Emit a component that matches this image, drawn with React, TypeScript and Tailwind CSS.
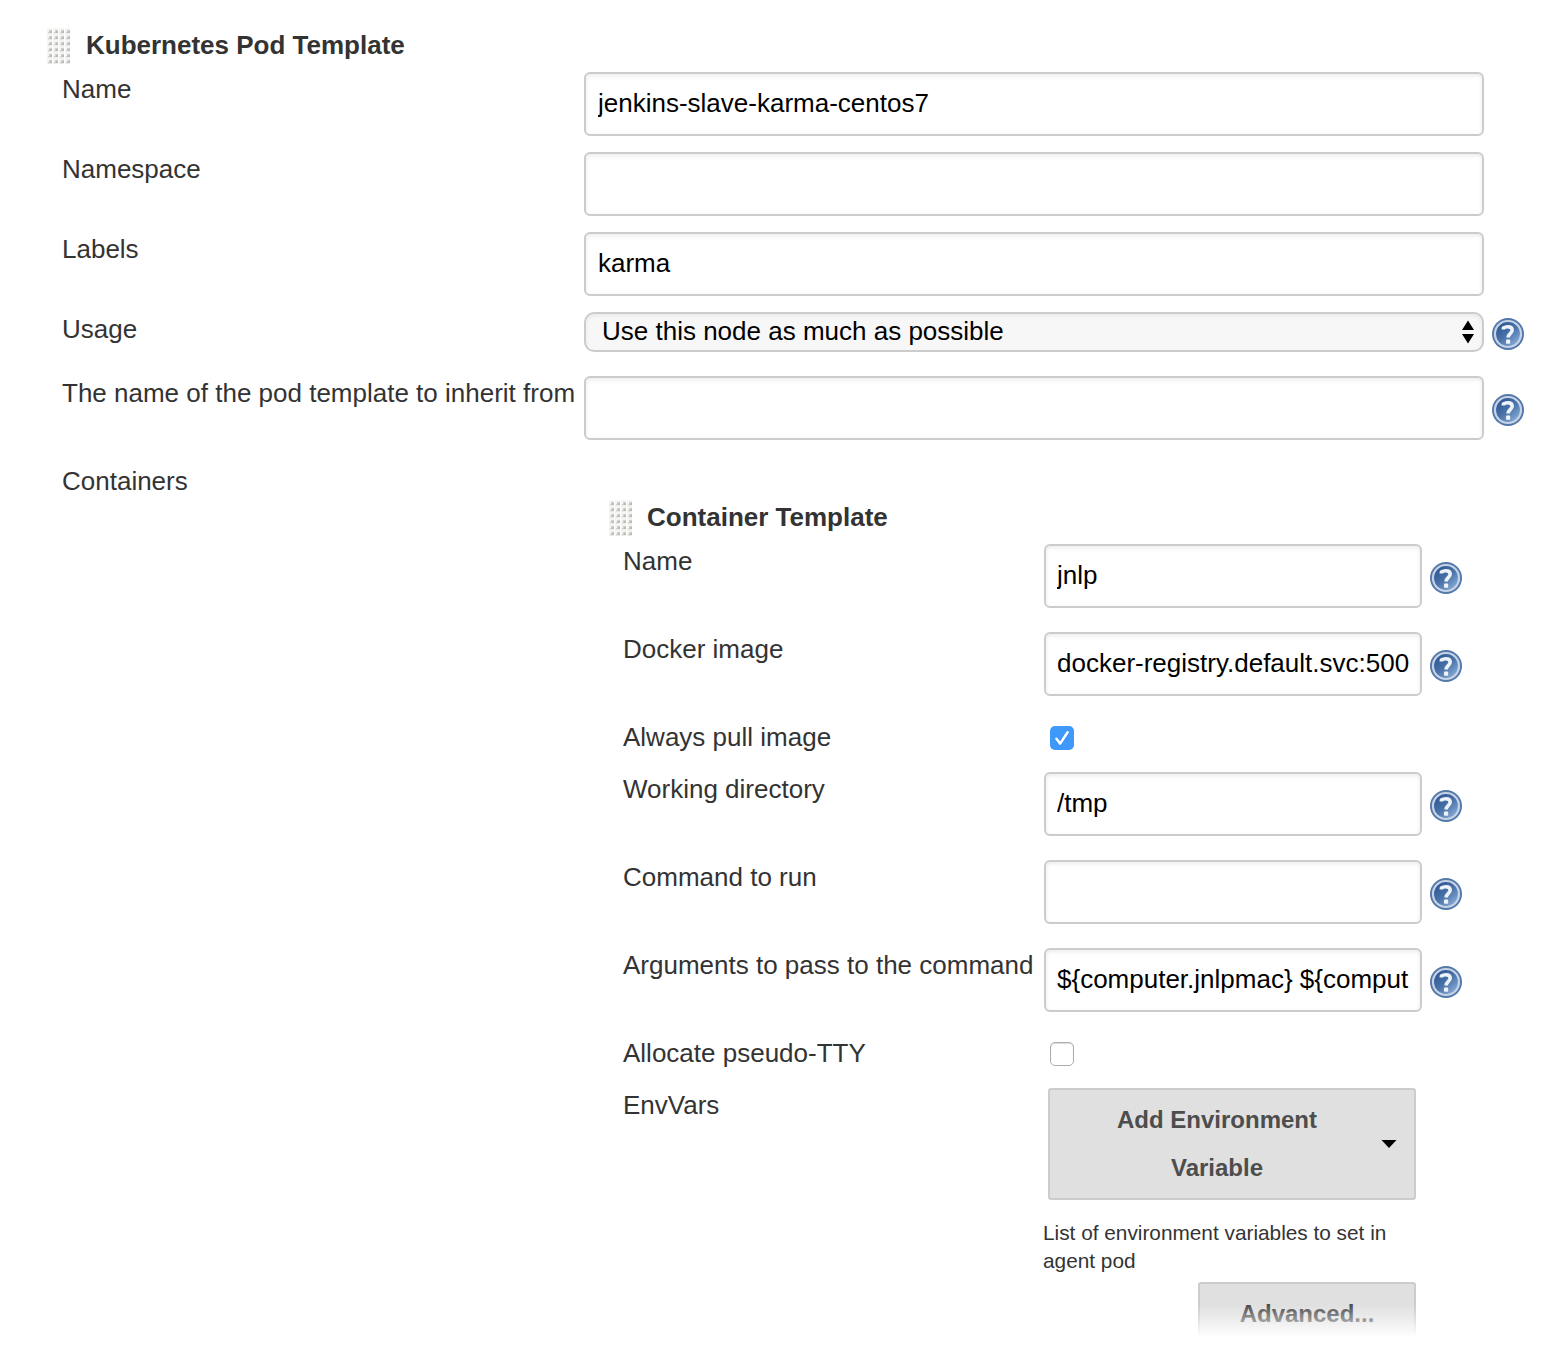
import type { ReactNode } from "react";

function DragHandle() {
  return (
    <svg width="24" height="36" viewBox="0 0 24 36" aria-hidden="true">
      <defs>
        <pattern id="grip" width="6" height="6" patternUnits="userSpaceOnUse">
          <rect x="1" y="0" width="5" height="6" fill="#f5f5f3" />
          <path d="M1.5 5.5 L5.5 1 V5.5 Z" fill="#dfdfdb" />
          <rect x="3" y="2" width="3" height="3" fill="#d2d2cd" />
          <rect x="4" y="3" width="2" height="2" fill="#bcbcb6" />
          <rect x="2" y="4" width="2" height="1" fill="#d2d2cd" />
        </pattern>
      </defs>
      <rect width="24" height="36" fill="url(#grip)" />
    </svg>
  );
}

function HelpIcon() {
  return (
    <svg width="32" height="32" viewBox="0 0 32 32" role="img" aria-label="Help">
      <defs>
        <linearGradient id="helpFill" x1="0.1" y1="0.1" x2="0.85" y2="0.95">
          <stop offset="0" stopColor="#2c5590" />
          <stop offset="0.5" stopColor="#4a73aa" />
          <stop offset="1" stopColor="#8db0d8" />
        </linearGradient>
      </defs>
      <circle cx="16" cy="16" r="16" fill="#5478a9" />
      <circle cx="16" cy="16" r="13" fill="url(#helpFill)" stroke="#c6d3e6" strokeWidth="2.2" />
      <path
        d="M11.4 11.6 V10 C12.6 9.2 14 8.8 15.8 8.8 C18.8 8.8 20.2 10.2 20.2 12.3 C20.2 15.2 16.1 15.6 16.1 19.6"
        fill="none"
        stroke="#eef3f9"
        strokeWidth="3.6"
        strokeLinejoin="round"
      />
      <rect x="14" y="21.6" width="4.2" height="4.2" rx="0.8" fill="#eef3f9" />
    </svg>
  );
}

function Heading({ gap, children }: { gap: string; children: ReactNode }) {
  return (
    <div className={`flex h-9 items-center ${gap}`}>
      <DragHandle />
      <h2 className="pb-0.5 text-[26px] leading-[34px] font-bold">{children}</h2>
    </div>
  );
}

function TextField({ label, value = "", padding = "px-[11px]" }: { label: string; value?: string; padding?: string }) {
  return (
    <input
      readOnly
      aria-label={label}
      value={value}
      className={`block h-16 w-full rounded-[6px] border-2 border-[#ccc] bg-white pb-px text-[26px] text-black shadow-[inset_0_2px_4px_rgba(0,0,0,0.08)] outline-none ${padding}`}
    />
  );
}

function OuterRow({ label, height, help, children }: { label: string; height: string; help?: string; children?: ReactNode }) {
  return (
    <div className={`grid grid-cols-[522px_900px_40px] items-start ${height}`}>
      <div className="leading-[34px] whitespace-nowrap">{label}</div>
      <div>{children}</div>
      {help && <div className={`pl-2 ${help}`}><HelpIcon /></div>}
    </div>
  );
}

function InnerRow({ label, height, help, children }: { label: string; height: string; help?: boolean; children?: ReactNode }) {
  return (
    <div className={`grid grid-cols-[421px_378px_40px] items-start ${height}`}>
      <div className="leading-[34px] whitespace-nowrap">{label}</div>
      <div>{children}</div>
      {help && <div className="pt-[18px] pl-2"><HelpIcon /></div>}
    </div>
  );
}

function CheckBox({ checked }: { checked?: boolean }) {
  return (
    <div className="pt-1.5 pl-1.5">
      {checked ? (
        <div role="checkbox" aria-checked="true" className="size-6 rounded-[5px] bg-[#3f99fa]">
          <svg width="24" height="24" viewBox="0 0 24 24">
            <path d="M6.5 13.4 L10.3 18.2 L17.6 7" fill="none" stroke="#2a78cf" strokeOpacity="0.5" strokeWidth="2.6" strokeLinecap="round" strokeLinejoin="round" />
            <path d="M6.4 12.8 L10.2 17.6 L17.6 6.3" fill="none" stroke="#fff" strokeWidth="2.5" strokeLinecap="round" strokeLinejoin="round" />
          </svg>
        </div>
      ) : (
        <div role="checkbox" aria-checked="false" className="size-6 rounded-[5px] border border-[#adadad] bg-white shadow-[inset_0_1px_1px_rgba(0,0,0,0.15)]" />
      )}
    </div>
  );
}

export default function App() {
  return (
    <main className="relative h-[1364px] w-[1548px] overflow-hidden bg-white pt-7 font-['Liberation_Sans',Arial,sans-serif] text-[26px] text-[#333]">
      <div className="pl-[46px]">
        <Heading gap="gap-4">Kubernetes Pod Template</Heading>
      </div>
      <div className="pt-2 pl-[62px]">
        <OuterRow label="Name" height="h-20">
          <TextField label="Name" value="jenkins-slave-karma-centos7" padding="px-3" />
        </OuterRow>
        <OuterRow label="Namespace" height="h-20">
          <TextField label="Namespace" />
        </OuterRow>
        <OuterRow label="Labels" height="h-20">
          <TextField label="Labels" value="karma" padding="px-3" />
        </OuterRow>
        <OuterRow label="Usage" height="h-16" help="pt-1.5">
          <div className="flex h-10 items-center justify-between rounded-[10px] border-2 border-[#ccc] bg-[#f7f7f7] pr-[7px] pl-4 text-black shadow-[inset_0_2px_4px_rgba(0,0,0,0.06)]">
            <span className="pb-0.5 leading-[34px]">Use this node as much as possible</span>
            <svg width="14" height="24" viewBox="0 0 14 24">
              <path d="M7 0.5 L13 10 H1 Z M7 23.5 L13 14 H1 Z" fill="#000" />
            </svg>
          </div>
        </OuterRow>
        <OuterRow label="The name of the pod template to inherit from" height="h-[88px]" help="pt-[18px]">
          <TextField label="The name of the pod template to inherit from" />
        </OuterRow>
        <OuterRow label="Containers" height="h-[900px]">
          <section className="pt-9">
            <div className="pl-6">
              <Heading gap="gap-[15px]">Container Template</Heading>
            </div>
            <div className="pt-2 pl-[39px]">
              <InnerRow label="Name" height="h-[88px]" help>
                <TextField label="Name" value="jnlp" />
              </InnerRow>
              <InnerRow label="Docker image" height="h-[88px]" help>
                <TextField label="Docker image" value="docker-registry.default.svc:500" />
              </InnerRow>
              <InnerRow label="Always pull image" height="h-[52px]">
                <CheckBox checked />
              </InnerRow>
              <InnerRow label="Working directory" height="h-[88px]" help>
                <TextField label="Working directory" value="/tmp" />
              </InnerRow>
              <InnerRow label="Command to run" height="h-[88px]" help>
                <TextField label="Command to run" />
              </InnerRow>
              <InnerRow label="Arguments to pass to the command" height="h-[88px]" help>
                <TextField label="Arguments to pass to the command" value="${computer.jnlpmac} ${comput" />
              </InnerRow>
              <InnerRow label="Allocate pseudo-TTY" height="h-[52px]">
                <CheckBox />
              </InnerRow>
              <InnerRow label="EnvVars" height="h-[276px]">
                <button className="ml-1 flex h-28 w-[368px] items-center rounded-[3px] border-2 border-[#ccc] bg-[#e0e0e0] pr-[17px] pl-10 text-2xl leading-[48px] font-bold text-[#4d4d4d]">
                  <span className="flex-1 pr-[37px] pb-px">Add Environment Variable</span>
                  <svg width="16" height="8" viewBox="0 0 16 8">
                    <path d="M0.5 0 H15.5 L8 8 Z" fill="#000" />
                  </svg>
                </button>
                <p className="-ml-px pt-[19px] text-[20.8px] leading-7">
                  List of environment variables to set in agent pod
                </p>
                <div className="flex justify-end pt-[7px] pr-1.5">
                  <button className="h-16 w-[218px] rounded-[3px] border-2 border-[#ccc] bg-[#e0e0e0] text-2xl leading-[48px] font-bold text-[#4d4d4d]">
                    Advanced...
                  </button>
                </div>
              </InnerRow>
            </div>
          </section>
        </OuterRow>
      </div>
      <div className="absolute inset-x-0 top-[1305px] bottom-0 bg-[linear-gradient(to_bottom,rgba(255,255,255,0)_0px,rgba(255,255,255,0.45)_16px,#fff_32px)]" />
    </main>
  );
}
